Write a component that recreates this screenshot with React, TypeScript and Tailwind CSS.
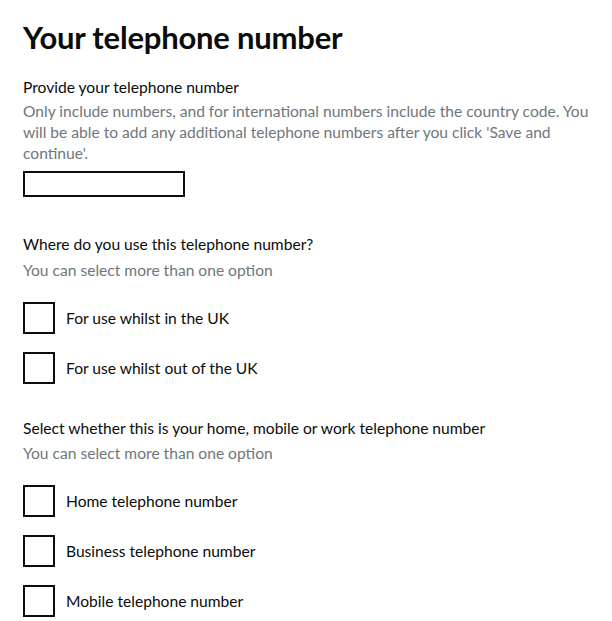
import React from 'react';

const font = { fontFamily: 'Lato, "Noto Sans", Arial, sans-serif' };

interface CheckboxProps {
  label: string;
}

const Checkbox: React.FC<CheckboxProps> = ({ label }) => (
  <label className="flex items-center h-8 cursor-pointer">
    <span className="w-8 h-8 border-2 border-[#0b0c0c] bg-white shrink-0" />
    <span className="ml-[11px] text-[15.6px] leading-6 text-[#0b0c0c]">{label}</span>
  </label>
);

export default function App() {
  return (
    <div className="min-h-screen bg-white pl-[23px] pr-4 pt-[19px]" style={font}>
      <h1 className="text-[31px] leading-9 font-bold text-[#0b0c0c] tracking-[-0.2px]">
        Your telephone number
      </h1>

      <div className="mt-5 text-[15.6px] leading-6 text-[#0b0c0c]">Provide your telephone number</div>
      <div className="mt-[2px] text-[15.6px] leading-[21px] text-[#6f777b] w-[574px]">
        Only include numbers, and for international numbers include the country code. You will be able to add any
        additional telephone numbers after you click 'Save and continue'.
      </div>
      <input
        type="text"
        className="mt-[7px] block w-[162px] h-[26px] border-2 border-[#0b0c0c] bg-white outline-none"
      />

      <div className="mt-[35px] text-[15.6px] leading-6 text-[#0b0c0c]">Where do you use this telephone number?</div>
      <div className="mt-1 text-[15.6px] leading-[21px] text-[#6f777b]">You can select more than one option</div>
      <div className="mt-[21px] flex flex-col gap-[18px]">
        <Checkbox label="For use whilst in the UK" />
        <Checkbox label="For use whilst out of the UK" />
      </div>

      <div className="mt-8 text-[15.6px] leading-6 text-[#0b0c0c]">
        Select whether this is your home, mobile or work telephone number
      </div>
      <div className="mt-[3px] text-[15.6px] leading-[21px] text-[#6f777b]">You can select more than one option</div>
      <div className="mt-[21px] flex flex-col gap-[18px]">
        <Checkbox label="Home telephone number" />
        <Checkbox label="Business telephone number" />
        <Checkbox label="Mobile telephone number" />
      </div>
    </div>
  );
}
